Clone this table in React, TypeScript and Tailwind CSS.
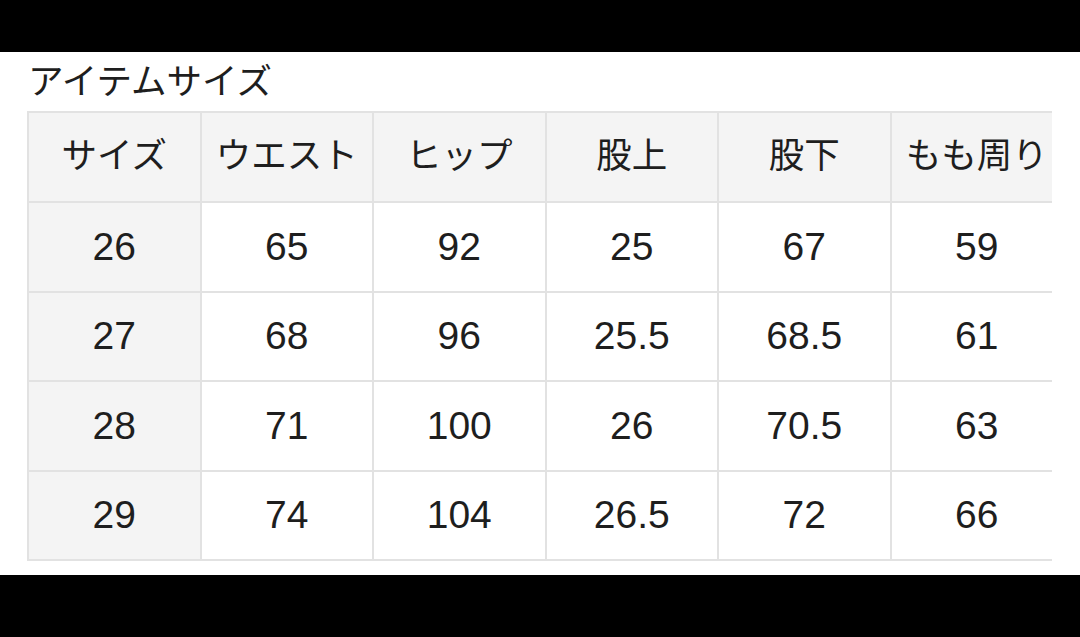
import React from "react";

const headers = ["サイズ", "ウエスト", "ヒップ", "股上", "股下", "もも周り"];

const rows = [
  ["26", "65", "92", "25", "67", "59"],
  ["27", "68", "96", "25.5", "68.5", "61"],
  ["28", "71", "100", "26", "70.5", "63"],
  ["29", "74", "104", "26.5", "72", "66"],
];

export default function App() {
  return (
    <div
      className="w-[1080px] h-[637px] bg-black flex flex-col overflow-hidden"
      style={{ fontFamily: '"Liberation Sans", "Noto Sans CJK JP", sans-serif' }}
    >
      <div className="h-[52px] shrink-0" />
      <div className="h-[523px] shrink-0 bg-white flex flex-col">
        <h1 className="pl-[28px] mt-[10px] h-[49px] text-[35.5px] leading-[40px] text-[#1e1e1e] font-normal">
          アイテムサイズ
        </h1>
        <div className="ml-[27px] w-[1025px] overflow-hidden">
          <div className="w-max border-l-2 border-t-2 border-[#e2e2e2]">
            <div className="flex bg-[#f4f4f4]">
              {headers.map((h) => (
                <div
                  key={h}
                  className="w-[172.5px] h-[90px] shrink-0 border-r-2 border-b-2 border-[#e2e2e2] flex items-center justify-center text-[35.5px] text-[#1e1e1e]"
                >
                  {h}
                </div>
              ))}
            </div>
            {rows.map((row, i) => (
              <div className="flex" key={i}>
                {row.map((v, j) => (
                  <div
                    key={j}
                    className={`w-[172.5px] h-[89.5px] shrink-0 border-r-2 border-b-2 border-[#e2e2e2] flex items-center justify-center text-[39px] text-[#1e1e1e] ${
                      j === 0 ? "bg-[#f4f4f4]" : "bg-white"
                    }`}
                  >
                    {v}
                  </div>
                ))}
              </div>
            ))}
          </div>
        </div>
      </div>
      <div className="flex-1" />
    </div>
  );
}
